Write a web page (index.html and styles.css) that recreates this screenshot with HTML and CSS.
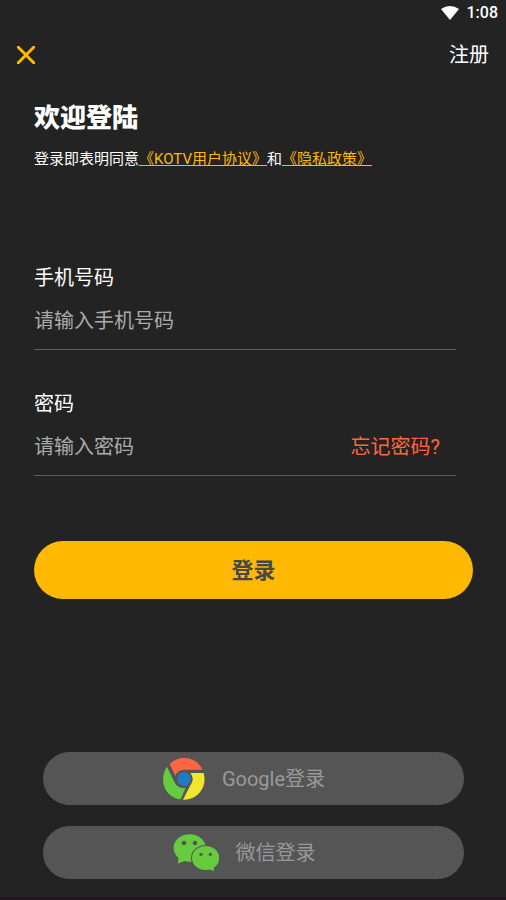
FILE: index.html
```html
<!DOCTYPE html>
<html lang="zh-CN">
<head>
<meta charset="utf-8">
<meta name="viewport" content="width=device-width, initial-scale=1">
<title>登录</title>
<link rel="stylesheet" href="styles.css">
</head>
<body>
<div class="status">
  <svg class="wifi" viewBox="0 0 18 14" aria-hidden="true"><path d="M0 3Q9-3 18 3L9 14Z"/></svg>
  <span>1:08</span>
</div>
<header class="bar">
  <button class="close" type="button" aria-label="关闭">
    <svg viewBox="0 0 18 18" aria-hidden="true"><path d="M1 1L17 17M17 1L1 17"/></svg>
  </button>
  <a class="register" href="#">注册</a>
</header>
<main class="main">
  <h1 class="title">欢迎登陆</h1>
  <p class="terms">登录即表明同意<a href="#">《KOTV用户协议》</a>和<a href="#">《隐私政策》</a></p>
  <form class="form">
    <div class="field">
      <label for="phone">手机号码</label>
      <div class="row"><input id="phone" type="tel" placeholder="请输入手机号码"></div>
    </div>
    <div class="field">
      <label for="password">密码</label>
      <div class="row"><input id="password" type="password" placeholder="请输入密码"><a class="forgot" href="#">忘记密码?</a></div>
    </div>
    <button class="login" type="button">登录</button>
  </form>
</main>
<footer class="social">
  <button class="pill" type="button">
    <svg class="chrome" viewBox="0 0 126 126" aria-hidden="true">
      <path class="red" d="M20 18C49-11 101-5 118 35H63Q43 36 37 53Z"/>
      <path class="green" d="M12 26C-15 67 7 120 53 124L68 90Q44 92 34 72Z"/>
      <path class="yellow" d="M122 45C134 88 103 127 60 125L82 82Q96 64 82 45Z"/>
      <circle class="hole" cx="63" cy="63" r="25"/>
      <circle class="blue" cx="63" cy="63" r="20"/>
    </svg>
    <span>Google登录</span>
  </button>
  <button class="pill" type="button">
    <svg class="wechat" viewBox="0 0 138 114" aria-hidden="true">
      <ellipse class="green" cx="50" cy="42" rx="48" ry="41"/>
      <path class="green" d="M18 66L14 89L42 78Z"/>
      <circle class="hole" cx="33" cy="27" r="7"/><circle class="hole" cx="66" cy="27" r="7"/>
      <ellipse class="hole" cx="98" cy="72" rx="44" ry="39"/>
      <ellipse class="green" cx="98" cy="72" rx="41" ry="36"/>
      <path class="green" d="M105 104L124 112L120 94Z"/>
      <circle class="hole" cx="84" cy="61" r="5"/><circle class="hole" cx="112" cy="61" r="5"/>
    </svg>
    <span>微信登录</span>
  </button>
</footer>
</body>
</html>
```
FILE: styles.css
```css
* { box-sizing: border-box; }
body {
  margin: 0;
  min-height: 100vh;
  display: flex;
  flex-direction: column;
  background: #232323;
  color: #fff;
  font-family: Roboto, "Noto Sans CJK SC", sans-serif;
  font-size: 20px;
  line-height: 28px;
  border-bottom: 3px solid #1f191d;
}
button, input { font: inherit; border: 0; padding: 0; background: none; }
button { cursor: pointer; }
a { text-decoration: none; }
.status {
  display: flex;
  justify-content: flex-end;
  align-items: center;
  gap: 8px;
  height: 26px;
  padding: 0 8px;
  font-size: 16px;
  font-weight: 500;
}
.wifi { width: 18px; height: 14px; fill: #fff; }
.bar {
  display: flex;
  justify-content: space-between;
  align-items: center;
  height: 58px;
  padding: 0 17px;
}
.close { display: flex; }
.close svg {
  width: 18px;
  height: 18px;
  fill: none;
  stroke: #ffb902;
  stroke-width: 3;
  stroke-linecap: round;
}
.register { color: #fff; }
.main { padding: 14px 33px 0 34px; }
.title { margin: 0; font-size: 26px; line-height: 40px; font-weight: 900; }
.terms { margin: 11px 0 0; font-size: 15px; line-height: 20px; }
.terms a { color: #ffb902; text-decoration: underline; }
.form { padding-top: 95px; }
.field { margin: 0 17px 39px 0; }
.field label { display: block; }
.row {
  display: flex;
  align-items: center;
  height: 58px;
  padding-top: 1px;
  border-bottom: 1px solid #5c5c5c;
}
.row input { flex: 1; min-width: 0; height: 28px; color: #fff; outline: 0; }
.row input::placeholder { color: #aaa; opacity: 1; }
.forgot { margin-right: 16px; color: #ff6543; }
.field + .field { margin-top: 40px; }
.login {
  display: block;
  width: 100%;
  height: 58px;
  margin-top: 65px;
  padding-top: 2px;
  border-radius: 29px;
  background: #ffb902;
  color: #484848;
  font-size: 22px;
  font-weight: 700;
}
.social {
  display: flex;
  flex-direction: column;
  gap: 21px;
  margin-top: auto;
  padding: 24px 42px 18px 43px;
}
.pill {
  display: flex;
  align-items: center;
  justify-content: center;
  gap: 17px;
  height: 53px;
  padding: 1px 19px 0 0;
  border-radius: 27px;
  background: #555;
  color: #999;
}
.chrome { width: 42px; height: 42px; }
.wechat { width: 46px; height: 38px; }
.red { fill: #ff6543; }
.green { fill: #67cb40; }
.yellow { fill: #f1e62e; }
.blue { fill: #217ac4; }
.hole { fill: #555; }
```
